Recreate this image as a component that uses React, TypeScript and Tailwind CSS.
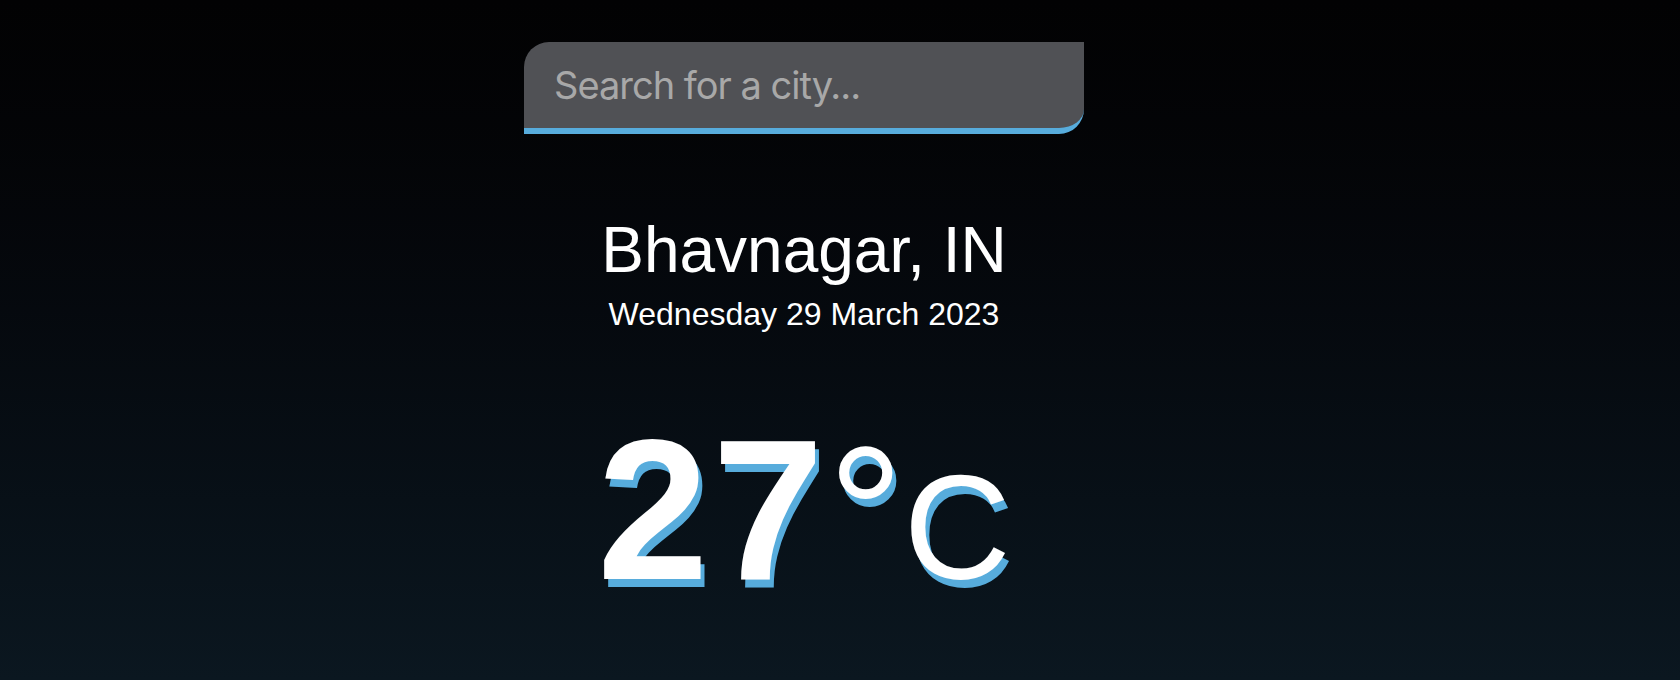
import { useState } from "react";

export default function App() {
  const [query, setQuery] = useState("");

  return (
    <div className="w-full h-[680px] overflow-hidden bg-gradient-to-b from-[#020203] to-[#0b1720] font-['Liberation_Sans',Arial,sans-serif] text-white">
      <div className="flex flex-col items-center pr-[72px] pt-[42px]">
        {/* Search */}
        <input
          type="text"
          value={query}
          onChange={(e) => setQuery(e.target.value)}
          placeholder="Search for a city..."
          className="w-[560px] h-[92px] pl-[30px] pr-8 bg-[#505155] rounded-tl-[25px] rounded-br-[25px] border-b-[6px] border-[#57acdc] font-['Inter',sans-serif] text-[38px] tracking-[-1px] text-white placeholder:text-[#a8a8a8] outline-none"
        />

        {/* Location */}
        <h1 className="mt-[84px] text-[64px] leading-none font-normal">Bhavnagar, IN</h1>
        <p className="mt-[16px] text-[32px] leading-none">Wednesday 29 March 2023</p>

        {/* Temperature */}
        <div className="mt-[80px] text-[200px] leading-none [text-shadow:4px_8px_0_#57acdc]">
          <span className="font-bold tracking-[4px]">27</span>
          <span className="font-normal text-[190px]">°</span>
          <span className="font-normal text-[148px]">C</span>
        </div>
      </div>
    </div>
  );
}
